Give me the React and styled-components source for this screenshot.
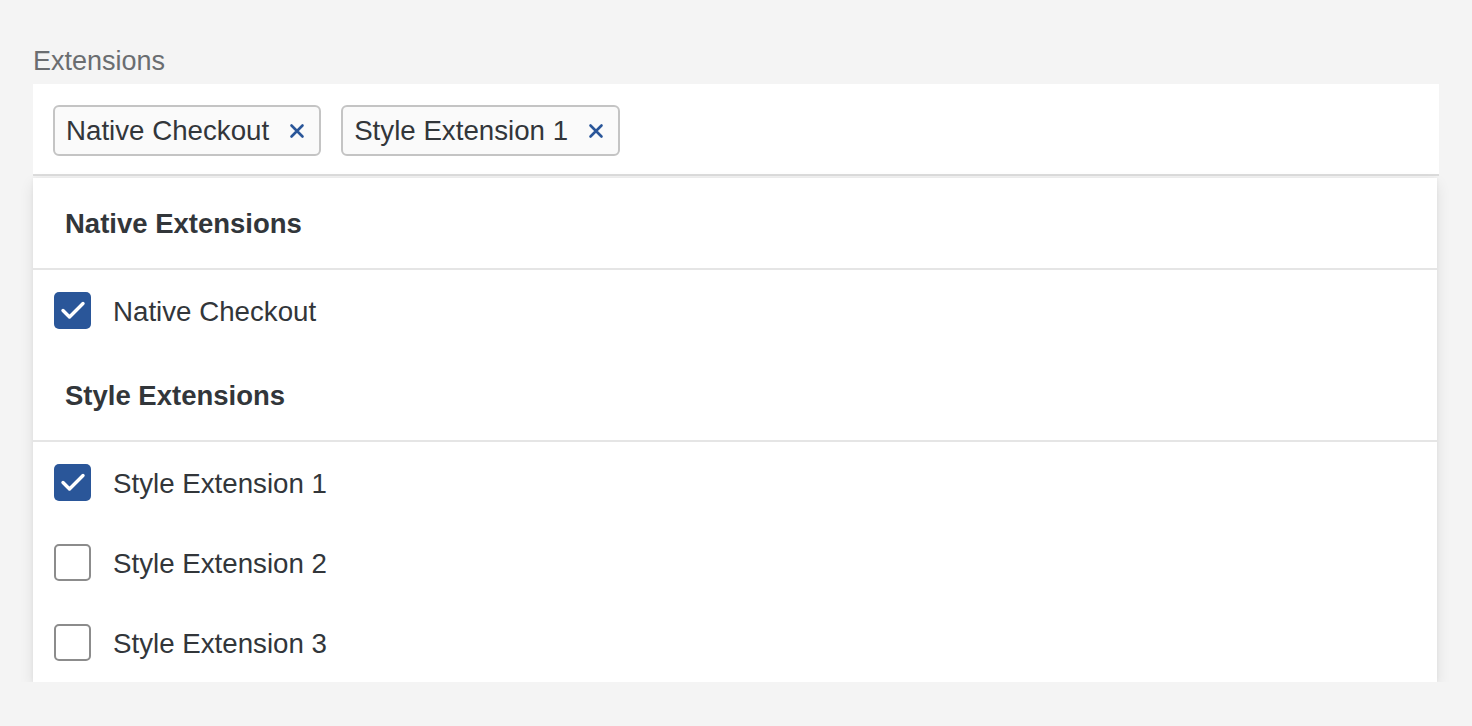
import React from "react";
import styled, { createGlobalStyle } from "styled-components";

const GlobalStyle = createGlobalStyle`
  html, body {
    margin: 0;
    padding: 0;
    background: #f4f4f4;
  }
  body {
    font-family: "Liberation Sans", Arial, sans-serif;
    color: #32363a;
  }
`;

const Page = styled.div`
  padding: 44px 33px 0 33px;
  width: 1406px;
`;

const Label = styled.div`
  font-size: 27px;
  line-height: 34px;
  color: #6a6d70;
  margin-bottom: 6px;
`;

const Input = styled.div`
  display: flex;
  align-items: center;
  gap: 20px;
  height: 92px;
  padding: 2px 20px 0;
  background: #fff;
  border-bottom: 2px solid #dcdcdc;
  box-sizing: border-box;
`;

const Token = styled.div`
  display: flex;
  align-items: center;
  gap: 20px;
  height: 51px;
  padding: 2px 14px 0 11px;
  box-sizing: border-box;
  background: #fafafa;
  border: 2px solid #c4c4c4;
  border-radius: 6px;
  font-size: 27.7px;
  color: #32363a;
`;

const Close = styled.svg`
  width: 16px;
  height: 16px;
  flex: none;
`;

const Popover = styled.div`
  width: 1404px;
  margin-top: 2px;
  background: #fff;
  box-shadow: 0 6px 14px rgba(0, 0, 0, 0.09), 0 0 4px rgba(0, 0, 0, 0.05);
`;

const GroupHeader = styled.div`
  display: flex;
  align-items: center;
  height: 92px;
  padding: 2px 0 0 32px;
  font-size: 27.5px;
  font-weight: bold;
  color: #32363a;
  border-bottom: 2px solid #e5e5e5;
  box-sizing: border-box;
`;

const Item = styled.div`
  display: flex;
  align-items: center;
  gap: 22px;
  height: 80px;
  padding-left: 21px;
  font-size: 27.7px;
  color: #32363a;
`;

const ItemText = styled.span`
  padding-top: 3px;
`;

const Box = styled.div`
  width: 37px;
  height: 37px;
  box-sizing: border-box;
  border-radius: 5px;
  display: flex;
  align-items: center;
  justify-content: center;
  background: ${(p) => (p.$checked ? "#2a5699" : "#fff")};
  border: ${(p) => (p.$checked ? "none" : "2px solid #8c8c8c")};
`;

const CloseIcon = () => (
  <Close viewBox="0 0 16 16">
    <path
      d="M2.5 2.5 L13.5 13.5 M13.5 2.5 L2.5 13.5"
      stroke="#2a5699"
      strokeWidth="2.6"
      strokeLinecap="round"
    />
  </Close>
);

const Check = ({ checked }) => (
  <Box $checked={checked}>
    {checked && (
      <svg width="26" height="20" viewBox="0 0 26 20">
        <path
          d="M3 10.5 L9.5 17 L23 3.5"
          fill="none"
          stroke="#fff"
          strokeWidth="3.4"
          strokeLinecap="round"
          strokeLinejoin="round"
        />
      </svg>
    )}
  </Box>
);

const groups = [
  {
    title: "Native Extensions",
    items: [{ name: "Native Checkout", checked: true }],
  },
  {
    title: "Style Extensions",
    items: [
      { name: "Style Extension 1", checked: true },
      { name: "Style Extension 2", checked: false },
      { name: "Style Extension 3", checked: false },
    ],
  },
];

export default function App() {
  const selected = groups.flatMap((g) => g.items.filter((i) => i.checked));
  return (
    <>
      <GlobalStyle />
      <Page>
        <Label>Extensions</Label>
        <Input>
          {selected.map((s) => (
            <Token key={s.name}>
              {s.name}
              <CloseIcon />
            </Token>
          ))}
        </Input>
        <Popover>
          {groups.map((g) => (
            <React.Fragment key={g.title}>
              <GroupHeader>{g.title}</GroupHeader>
              {g.items.map((i) => (
                <Item key={i.name}>
                  <Check checked={i.checked} />
                  <ItemText>{i.name}</ItemText>
                </Item>
              ))}
            </React.Fragment>
          ))}
        </Popover>
      </Page>
    </>
  );
}
